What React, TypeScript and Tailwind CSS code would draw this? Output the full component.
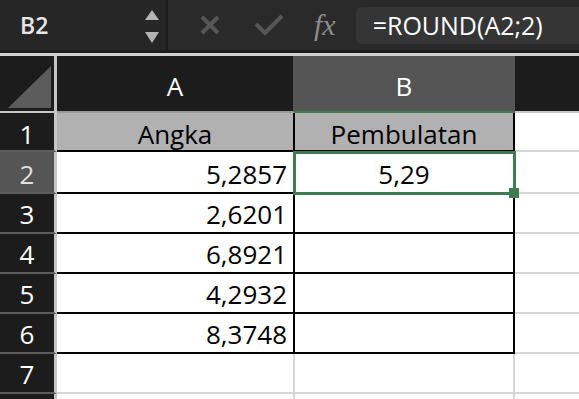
import React from 'react';

type Align = 'left' | 'center' | 'right';

interface Row {
  label: string;
  height: string;
  pb: string;
  a: string;
  b: string;
  aAlign: Align;
  bAlign: Align;
  fill?: boolean;
  table: boolean;
  selected?: boolean;
}

const rows: Row[] = [
  { label: '1', height: 'h-[39px]', pb: 'pb-[3px]', a: 'Angka', b: 'Pembulatan', aAlign: 'center', bAlign: 'center', fill: true, table: true },
  { label: '2', height: 'h-[42px]', pb: 'pb-[5px]', a: '5,2857', b: '5,29', aAlign: 'right', bAlign: 'center', table: true, selected: true },
  { label: '3', height: 'h-[40px]', pb: 'pb-[5px]', a: '2,6201', b: '', aAlign: 'right', bAlign: 'center', table: true },
  { label: '4', height: 'h-[40px]', pb: 'pb-[5px]', a: '6,8921', b: '', aAlign: 'right', bAlign: 'center', table: true },
  { label: '5', height: 'h-[40px]', pb: 'pb-[5px]', a: '4,2932', b: '', aAlign: 'right', bAlign: 'center', table: true },
  { label: '6', height: 'h-[40px]', pb: 'pb-[5px]', a: '8,3748', b: '', aAlign: 'right', bAlign: 'center', table: true },
  { label: '7', height: 'h-[40px]', pb: 'pb-[5px]', a: '', b: '', aAlign: 'right', bAlign: 'center', table: false },
  { label: '', height: 'h-[8px]', pb: 'pb-0', a: '', b: '', aAlign: 'right', bAlign: 'center', table: false },
];

const alignCls: Record<Align, string> = {
  left: 'justify-start pl-[6px]',
  center: 'justify-center',
  right: 'justify-end pr-[6px]',
};

function TopBar() {
  return (
    <div className="flex h-[53px] bg-[#2a2a2a] border-b-[3px] border-[#1e1e1e]">
      {/* name box */}
      <div className="flex w-[168px] items-center justify-between pl-[20px] pr-[6px] bg-[#262626] border-r-2 border-[#1c1c1c]">
        <span className="text-[23px] font-semibold leading-none text-[#e6e6e6]">B2</span>
        <svg width="16" height="36" viewBox="0 0 16 36" className="mt-[3px]">
          <polygon points="1,11 15,11 8,1" fill="#b4b4b4" />
          <polygon points="1,23 15,23 8,34" fill="#b4b4b4" />
        </svg>
      </div>
      <div className="flex flex-1 items-center">
        <svg width="22" height="22" viewBox="0 0 22 22" className="ml-[31px]">
          <path d="M3 3 L19 19 M19 3 L3 19" stroke="#565656" strokeWidth="4" />
        </svg>
        <svg width="30" height="22" viewBox="0 0 30 22" className="ml-[33px]">
          <path d="M2 10 L11 19 L28 2" stroke="#565656" strokeWidth="4" fill="none" />
        </svg>
        <span className="ml-[30px] font-['Liberation_Serif',serif] italic text-[30px] leading-none text-[#8c8c8c]">fx</span>
        <div className="ml-[20px] flex h-[37px] flex-1 items-center rounded-l-[5px] bg-[#353535] pl-[17px]">
          <span className="text-[25px] leading-none text-white">=ROUND(A2;2)</span>
        </div>
      </div>
    </div>
  );
}

function Sheet() {
  return (
    <div className="relative grid grid-cols-[57px_238px_220px_64px]">
      {/* column headers */}
      <div className="h-[57px] bg-[#1c1c1c] border-r-[3px] border-b-2 border-r-[#c6c6c6] border-b-[#c6c6c6]">
        <svg width="54" height="55" viewBox="0 0 54 55">
          <polygon points="8,52 51,52 51,10" fill="#5c5c5c" />
        </svg>
      </div>
      <div className="flex h-[57px] items-end justify-center pb-[12px] bg-[#1c1c1c] border-r-2 border-b-2 border-r-[#555555] border-b-[#9a9a9a]">
        <span className="text-[26px] leading-none text-white">A</span>
      </div>
      <div className="flex h-[57px] items-end justify-center pb-[12px] bg-[#555555] border-r-2 border-b-2 border-r-[#555555] border-b-[#3f7d50]">
        <span className="text-[26px] leading-none text-white">B</span>
      </div>
      <div className="h-[57px] bg-[#1c1c1c] border-b-2 border-[#c6c6c6]" />

      {rows.map((r, i) => (
        <React.Fragment key={i}>
          <div
            className={`flex items-end justify-center ${r.height} ${r.pb} border-r-[3px] border-b-2 border-r-[#c6c6c6] border-b-[#5e5e5e] ${
              r.selected ? 'bg-[#555555]' : 'bg-[#1c1c1c]'
            }`}
          >
            <span className={`text-[26px] leading-none ${r.selected ? 'text-[#e0e0e0]' : 'text-white'}`}>{r.label}</span>
          </div>
          <div
            className={`flex items-end ${r.height} ${r.pb} ${alignCls[r.aAlign]} border-r-2 border-b-2 ${
              r.table ? 'border-black' : 'border-[#d6d6d6]'
            } ${r.fill ? 'bg-[#b1b1b1]' : 'bg-white'}`}
          >
            <span className="text-[26px] leading-none text-black">{r.a}</span>
          </div>
          <div
            className={`flex items-end ${r.height} ${r.pb} ${alignCls[r.bAlign]} border-r-2 border-b-2 ${
              r.table ? 'border-black' : 'border-[#d6d6d6]'
            } ${r.fill ? 'bg-[#b1b1b1]' : 'bg-white'}`}
          >
            <span className="text-[26px] leading-none text-black">{r.b}</span>
          </div>
          <div className={`${r.height} bg-white border-b-2 border-[#d6d6d6]`} />
        </React.Fragment>
      ))}

      {/* active cell B2 */}
      <div className="pointer-events-none absolute left-[293px] top-[95px] h-[44px] w-[223px] border-[3px] border-[#3f7d50]" />
      <div className="absolute left-[509px] top-[132px] h-[10px] w-[10px] bg-[#3f7d50]" />
    </div>
  );
}

export default function App() {
  return (
    <div className="h-[399px] w-[579px] overflow-hidden bg-white font-['Open_Sans',sans-serif]">
      <TopBar />
      <div className="h-[3px] bg-[#d0d0d0]" />
      <Sheet />
    </div>
  );
}
